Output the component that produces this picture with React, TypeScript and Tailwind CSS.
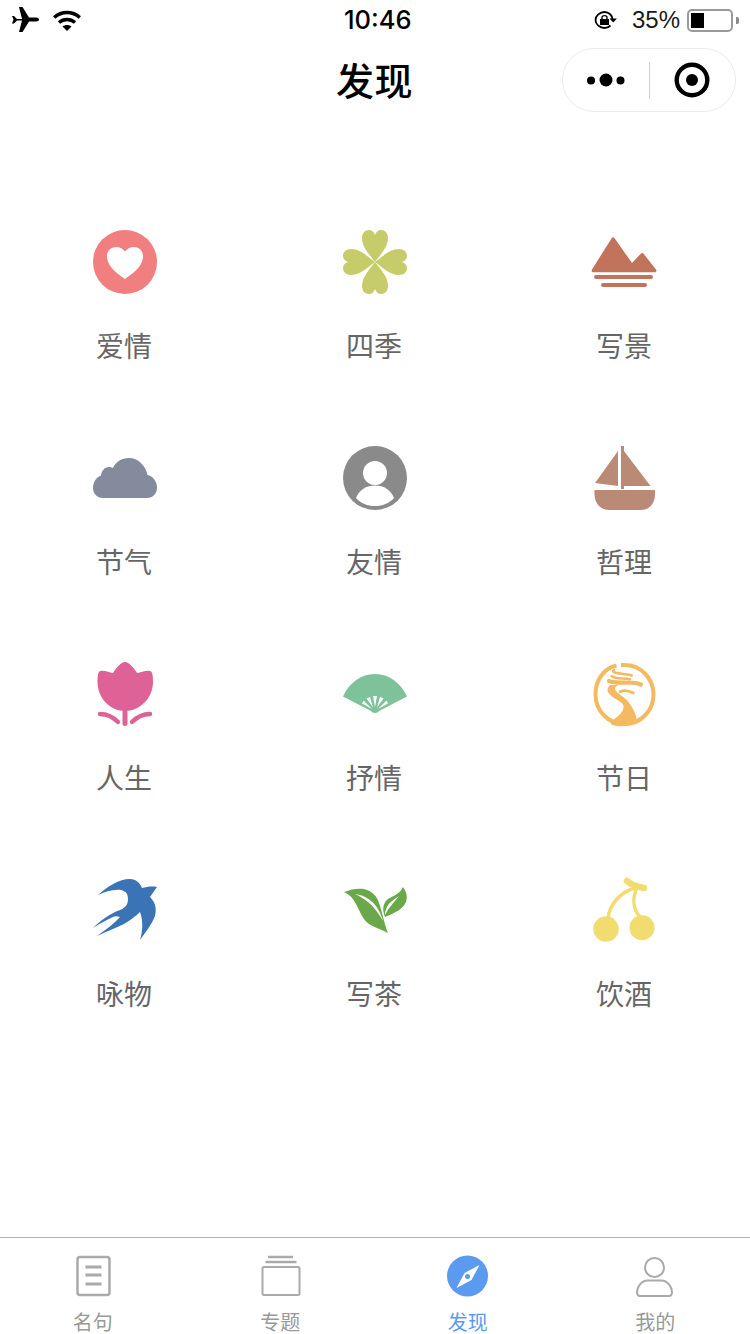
const cjk = 'font-["Noto_Sans_CJK_SC","Liberation_Sans",sans-serif]';

function Icon({ children }: { children: React.ReactNode }) {
  return (
    <svg width="64" height="64" viewBox="0 0 64 64" className="overflow-visible">
      {children}
    </svg>
  );
}

const leaf = 'M32 32C26 24 19 17 19 8C19 3 22 0 26 0C29 0 31 2 32 5C33 2 35 0 38 0C42 0 45 3 45 8C45 17 38 24 32 32Z';

const topics = [
  {
    name: '爱情',
    icon: (
      <>
        <circle cx="32" cy="32" r="32" fill="#f17f80" />
        <path d="M32 49C27 45 14 38 14 26C14 20 19 17 23 17C27 17 30 19 32 21.500C34 19 37 17 41 17C45 17 50 20 50 26C50 38 37 45 32 49Z" fill="#fff" />
      </>
    ),
  },
  {
    name: '四季',
    icon: (
      <g fill="#c6cc69">
        <path d={leaf} />
        <path d={leaf} transform="rotate(90 32 32)" />
        <path d={leaf} transform="rotate(180 32 32)" />
        <path d={leaf} transform="rotate(270 32 32)" />
      </g>
    ),
  },
  {
    name: '写景',
    icon: (
      <g fill="#c2735b">
        <path d="M18.500 8.500C19.500 6.800 20.800 6.800 21.800 8.500L39 33L47.500 24C48.500 22.800 49.800 22.800 50.800 24L63 39.500C64 41 63.300 42.300 61.500 42.300H0.500C-1.200 42.300 -1.800 41 -1 39.500Z" />
        <rect x="1" y="45" width="59" height="4" rx="2" />
        <rect x="8" y="53" width="46" height="4" rx="2" />
      </g>
    ),
  },
  {
    name: '节气',
    icon: (
      <path d="M10 52C4 52 0 47.500 0 42C0 36 3.500 31 8 29.500C8.500 24.500 12 21 16 21C17.500 21 19 21.500 20 22C22.500 16 28.500 12 36 12C45 12 52.500 19.500 54.500 29C60 30 64 35.500 64 41.500C64 47.500 60 52 54 52Z" fill="#848b9d" />
    ),
  },
  {
    name: '友情',
    icon: (
      <>
        <circle cx="32" cy="32" r="32" fill="#8a8a8a" />
        <circle cx="32" cy="27" r="12" fill="#fff" />
        <path d="M13 52C16 44 23.500 39.500 32 39.500C40.500 39.500 48 44 51 52C46 57.500 39.500 60 32 60C24.500 60 18 57.500 13 52Z" fill="#fff" />
      </>
    ),
  },
  {
    name: '哲理',
    icon: (
      <g fill="#b98b77">
        <path d="M1.500 44H62V48C62 58 56 64 48 64H16C8 64 1.500 58 1.500 48Z" />
        <rect x="28" y="0" width="3" height="43" />
        <path d="M25 5L2 37L25 40Z" />
        <path d="M31 5L57.500 40H31Z" />
      </g>
    ),
  },
  {
    name: '人生',
    icon: (
      <g fill="#de6296">
        <path d="M32 0C36 0 41 6 44 11C48 10.500 53 8 57 9C59.500 9.500 60 14 60 20C60 36 47 49 32 49C17 49 4.500 36 4.500 20C4.500 14 5 9.500 7.500 9C12 8 16 10.500 20 11C23 6 28 0 32 0Z" />
        <rect x="29.500" y="46" width="5" height="18" rx="2.500" />
        <path d="M7 52C14 52 20 55 25 60" fill="none" stroke="#de6296" strokeWidth="4.500" strokeLinecap="round" />
        <path d="M57 52C50 52 44 55 39 60" fill="none" stroke="#de6296" strokeWidth="4.500" strokeLinecap="round" />
      </g>
    ),
  },
  {
    name: '抒情',
    icon: (
      <>
        <path d="M0 34.500C6 21 18 12 32 12C46 12 58 21 64 34.500L36 49C35 51.500 29 51.500 28 49Z" fill="#7dc29a" />
        <g fill="#fff">
          <path d="M29 47L19 41.500L20.500 38.500Z" />
          <path d="M30 45.500L23.500 36.500L27 35Z" />
          <path d="M32 45L30 34H34Z" />
          <path d="M34 45.500L37 35L40.500 36.500Z" />
          <path d="M35 47L43.500 38.500L45 41.500Z" />
        </g>
      </>
    ),
  },
  {
    name: '节日',
    icon: (
      <>
        <path d="M23.500 3.500C11 6 2.500 18 2.500 32.500C2.500 48.500 15 62 31.500 62C48 62 60.500 48.500 60.500 32.500C60.500 16.500 48 3 31.500 3L28 3" fill="none" stroke="#f5b95f" strokeWidth="4" />
        <path d="M17 23C14.500 25 14 28 15 30C17 33 19 35 22 36.500C27 39.500 31 42 30.500 45C30.500 49 27 53 22 56.500C20 58 18.500 60 17.700 62C21 64 26 64.500 30.500 64C36 63.500 41 62 43.700 59.700C43.500 55 42.500 52 40.500 48C38.500 44 36.500 41 33.700 38C31 35.500 28 33.500 25.500 31.500C23 29.500 21.500 27.500 22 26C22.500 24.500 24 23.500 25.500 23Z" fill="#f5b95f" />
        <g fill="none" stroke="#f5b95f" strokeLinecap="round">
          <path d="M16 19C25 23 38 18 48 22.500" strokeWidth="4.200" />
          <path d="M21 8C17 12 30 11 38.700 13.500" strokeWidth="2.600" />
          <path d="M18.700 14C24 18 30 15.500 37 17.300" strokeWidth="2.600" />
          <path d="M27 29.700C31 28 36 28.500 40.300 31" strokeWidth="2.800" />
        </g>
      </>
    ),
  },
  {
    name: '咏物',
    icon: (
      <path d="M5 17C15 8 26 1 37 1C43 1 47 5 49 10C53 9 59 8 64 9L57 19C62 24 64 30 62 38C59 46 52 55 47 62C50 52 50 42 47 34C43 38 36 43 31 46C23 50 12 54 4 58C12 52 21 46 27 39C24 38 22 38 20 39C13 42 6 46 0 50C8 42 18 35 27 32C32 30 35 27 35 21C35 16 33 13 28 12C20 11 12 14 5 17Z" fill="#3a74b7" />
    ),
  },
  {
    name: '写茶',
    icon: (
      <>
        <path d="M1 14C8 11 15 10 21 11C29 13 34 18 36 25C39 33 41 45 45 55C38 51 32 50 26 46C19 41 17 33 13 26C10 20 6 16 1 14Z" fill="#6aa84a" />
        <path d="M12 16C22 17 32 24 36 33C38 37 39 40 40 43C36 36 31 29 25 24C21 21 17 18 12 16Z" fill="#fff" />
        <path d="M60 9C63 13 65 18 63 24C60 31 52 35 42 39C40 34 39 28 43 23C47 18 56 18 60 9Z" fill="#6aa84a" />
        <path d="M56 18C52 23 46 29 42 37C42 31 45 26 49 23C51 21 54 20 56 18Z" fill="#fff" />
      </>
    ),
  },
  {
    name: '饮酒',
    icon: (
      <>
        <circle cx="13" cy="51" r="12.700" fill="#f2dc70" />
        <circle cx="49" cy="49.700" r="12.500" fill="#f2dc70" />
        <g fill="none" stroke="#f2dc70" strokeLinecap="round">
          <path d="M15 41C16 27 27 14 42 10" strokeWidth="3.500" />
          <path d="M43 12C39 22 41 32 47 39" strokeWidth="3.500" />
          <path d="M34 3C39 7 45 9 51 10" strokeWidth="6.500" />
        </g>
      </>
    ),
  },
];

const tabs = [
  {
    name: '名句',
    icon: (
      <g fill="none" stroke="#aaaaaa" strokeWidth="2.500">
        <rect x="-16.500" y="1" width="32" height="38" rx="2.500" />
        <path d="M-8.500 11H7.500M-8.500 19H7.500M-8.500 28H7.500" strokeWidth="2.800" />
      </g>
    ),
  },
  {
    name: '专题',
    icon: (
      <g fill="none" stroke="#aaaaaa" strokeWidth="2">
        <rect x="-18.500" y="11" width="37" height="28" rx="1.500" />
        <path d="M-15.500 6H15.500M-13 1H12" strokeWidth="2.400" />
      </g>
    ),
  },
  {
    name: '发现',
    active: true,
    icon: (
      <>
        <circle cx="-1.500" cy="20" r="20.500" fill="#5c9aef" />
        <path d="M10.500 9L2.500 24L-12.500 32L-4.500 17Z" fill="#fff" />
        <circle cx="-1.500" cy="20.500" r="2.500" fill="#5c9aef" />
      </>
    ),
  },
  {
    name: '我的',
    icon: (
      <g fill="none" stroke="#aaaaaa" strokeWidth="2">
        <circle cx="-1.500" cy="11.500" r="9.500" />
        <path d="M-8.500 24.500H5.500C11.500 24.500 16 31 16 36C16 39 15 40 13 40H-16C-18 40 -19 39 -19 36C-19 31 -14.500 24.500 -8.500 24.500Z" />
      </g>
    ),
  },
];

function StatusBar() {
  return (
    <div className="h-10 flex items-center justify-between pl-3 pr-[11px] relative">
      <div className="flex items-center gap-[14px]">
        <svg width="27" height="26" viewBox="0 0 27 26" fill="#000">
          <path d="M0 9L2 9L5 12H10L7 0H10.500L17 10.500H24C26 10.500 27 11.500 27 12.500C27 13.500 26 14.500 24 14.500H17L10.500 25H7L10 13.500H5L2 16.500H0L1.500 12.500Z" />
        </svg>
        <svg width="28" height="21" viewBox="0 0 28 21" fill="none" stroke="#000" strokeWidth="3.400">
          <path d="M1.200 7.500C8.500 0.800 19.500 0.800 26.800 7.500" />
          <path d="M6 12.500C10.500 8.500 17.500 8.500 22 12.500" />
          <path d="M14 21L9.500 16.500C12 14.500 16 14.500 18.500 16.500Z" fill="#000" stroke="none" />
        </svg>
      </div>
      <div className="absolute left-[344px] top-[3px] text-[25.500px] leading-[34px] font-['Inter',sans-serif] font-medium text-black">
        10:46
      </div>
      <div className="flex items-center">
        <svg width="23" height="18" viewBox="0 0 23 18" fill="none" stroke="#000" strokeWidth="1.800" className="mr-[15px]">
          <path d="M16.500 14.500C15 16 13 17 10.500 17C6 17 1.500 13.500 1.500 9C1.500 4.500 6 1 10.500 1C15 1 18.500 4.500 18.500 8.500" />
          <path d="M15.500 7.500H23L19.200 11.500Z" fill="#000" stroke="none" />
          <rect x="6" y="8" width="9" height="6" fill="#000" stroke="none" />
          <path d="M8 8V6.500C8 4 13 4 13 6.500V8" strokeWidth="1.400" />
        </svg>
        <span className="text-[24px] leading-[34px] font-['Liberation_Sans',sans-serif] text-[#1a1a1a] mr-[7px]">35%</span>
        <div className="w-[46px] h-[23px] border-2 border-[#9a9a9a] rounded-[5px] p-[2px]">
          <div className="w-[13px] h-[15px] bg-black" />
        </div>
        <div className="w-[3px] h-[7px] bg-[#8a8a8a] ml-[3px] rounded-r-[2px]" />
      </div>
    </div>
  );
}

function NavBar() {
  return (
    <div className="h-20 flex items-center justify-center relative">
      <h1 className={`${cjk} text-[38px] leading-[50px] font-medium text-black tracking-[0.5px] mb-[2px] pr-px`}>发现</h1>
      <div className="absolute right-[14px] top-2 w-[174px] h-16 rounded-full border border-[#ebebeb] bg-white flex items-center">
        <div className="w-[86px] flex justify-center">
          <svg width="38" height="14" viewBox="0 0 38 14" fill="#000">
            <circle cx="4" cy="7.500" r="4" />
            <circle cx="19" cy="7" r="6.500" />
            <circle cx="33.500" cy="7.500" r="4" />
          </svg>
        </div>
        <div className="w-px h-[37px] bg-[#cfcfcf]" />
        <div className="flex-1 flex justify-center pr-[2px]">
          <svg width="36" height="36" viewBox="0 0 36 36" fill="none">
            <circle cx="18" cy="18" r="15.300" stroke="#000" strokeWidth="4.400" />
            <circle cx="18" cy="18" r="6" fill="#000" />
          </svg>
        </div>
      </div>
    </div>
  );
}

export default function App() {
  return (
    <div className={`w-[750px] h-[1334px] bg-white flex flex-col overflow-hidden ${cjk}`}>
      <StatusBar />
      <NavBar />

      {/* Topics */}
      <div className="flex-1 pt-[110px]">
        <div className="grid grid-cols-3 auto-rows-[216px]">
          {topics.map((t) => (
            <div key={t.name} className="flex flex-col items-center">
              <Icon>{t.icon}</Icon>
              <div className="mt-[31px] pr-0.5 text-[28px] leading-10 text-[#666666]">{t.name}</div>
            </div>
          ))}
        </div>
      </div>

      {/* Tab bar */}
      <div className="h-[97px] border-t border-[#b4b4b4] grid grid-cols-4 bg-white">
        {tabs.map((t) => (
          <div key={t.name} className="flex flex-col items-center pt-[18px]">
            <svg width="44" height="41" viewBox="-22 0 44 41" className="overflow-visible">
              {t.icon}
            </svg>
            <div className={`mt-[16px] pr-0.5 text-[20px] leading-[20px] font-['Liberation_Sans','Noto_Sans_CJK_SC',sans-serif] ${t.active ? 'text-[#5c9aef]' : 'text-[#999999]'}`}>
              {t.name}
            </div>
          </div>
        ))}
      </div>
    </div>
  );
}
